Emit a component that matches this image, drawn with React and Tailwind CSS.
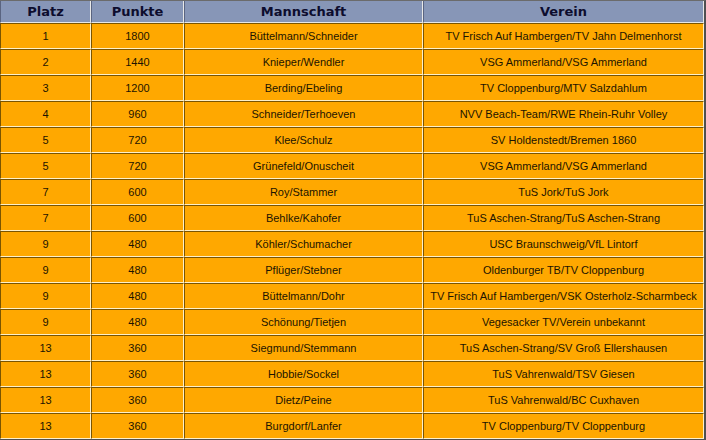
const rows = [
  ['1', '1800', 'Büttelmann/Schneider', 'TV Frisch Auf Hambergen/TV Jahn Delmenhorst'],
  ['2', '1440', 'Knieper/Wendler', 'VSG Ammerland/VSG Ammerland'],
  ['3', '1200', 'Berding/Ebeling', 'TV Cloppenburg/MTV Salzdahlum'],
  ['4', '960', 'Schneider/Terhoeven', 'NVV Beach-Team/RWE Rhein-Ruhr Volley'],
  ['5', '720', 'Klee/Schulz', 'SV Holdenstedt/Bremen 1860'],
  ['5', '720', 'Grünefeld/Onuscheit', 'VSG Ammerland/VSG Ammerland'],
  ['7', '600', 'Roy/Stammer', 'TuS Jork/TuS Jork'],
  ['7', '600', 'Behlke/Kahofer', 'TuS Aschen-Strang/TuS Aschen-Strang'],
  ['9', '480', 'Köhler/Schumacher', 'USC Braunschweig/VfL Lintorf'],
  ['9', '480', 'Pflüger/Stebner', 'Oldenburger TB/TV Cloppenburg'],
  ['9', '480', 'Büttelmann/Dohr', 'TV Frisch Auf Hambergen/VSK Osterholz-Scharmbeck'],
  ['9', '480', 'Schönung/Tietjen', 'Vegesacker TV/Verein unbekannt'],
  ['13', '360', 'Siegmund/Stemmann', 'TuS Aschen-Strang/SV Groß Ellershausen'],
  ['13', '360', 'Hobbie/Sockel', 'TuS Vahrenwald/TSV Giesen'],
  ['13', '360', 'Dietz/Peine', 'TuS Vahrenwald/BC Cuxhaven'],
  ['13', '360', 'Burgdorf/Lanfer', 'TV Cloppenburg/TV Cloppenburg'],
]

const headers = ['Platz', 'Punkte', 'Mannschaft', 'Verein']

export default function App() {
  return (
    <div className="w-[706px] h-[440px] bg-white overflow-hidden">
      <table className="w-[706px] table-fixed border-separate border-spacing-0 border-t border-r-2 border-b border-t-[#6b6b6b] border-r-[#505050] border-b-[#505050] font-['Liberation_Sans',Arial,sans-serif]">
        <colgroup>
          <col className="w-[91px]" />
          <col className="w-[93px]" />
          <col className="w-[239px]" />
          <col />
        </colgroup>
        <thead>
          <tr>
            {headers.map((h) => (
              <th
                key={h}
                className="h-[22px] p-0 bg-[#8796b7] text-[#0d0d2e] text-[13px] font-bold font-['DejaVu_Sans',Verdana,sans-serif] text-center border-r border-b border-r-[#e8e8e8] border-b-[#e8e8e8] border-l border-l-[#5a6480]"
              >
                {h}
              </th>
            ))}
          </tr>
        </thead>
        <tbody>
          {rows.map((r, i) => (
            <tr key={i}>
              {r.map((c, j) => (
                <td
                  key={j}
                  className="h-[26px] p-0 bg-[#ffa800] text-[#1c1400] text-[11px] text-center whitespace-nowrap border border-t-[#7a5400] border-l-[#7a5400] border-b-[#fff0c8] border-r-[#fff0c8]"
                >
                  {c}
                </td>
              ))}
            </tr>
          ))}
        </tbody>
      </table>
    </div>
  )
}
